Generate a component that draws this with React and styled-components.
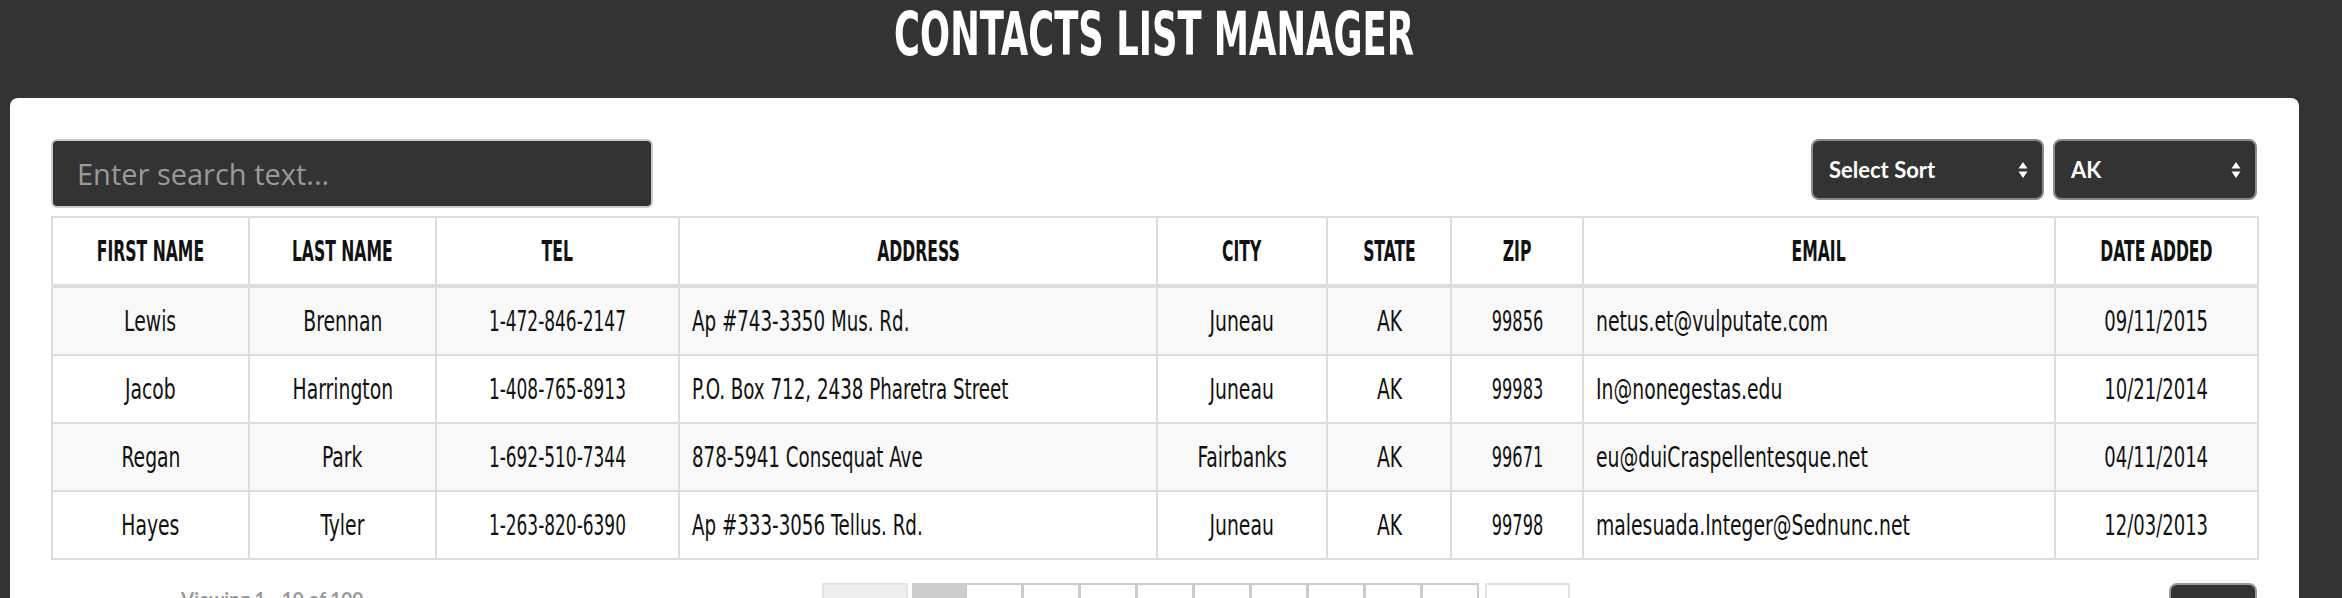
import React from "react";
import styled, { createGlobalStyle } from "styled-components";

const GlobalStyle = createGlobalStyle`
  html, body {
    margin: 0;
    padding: 0;
    background: #333333;
    height: 598px;
    overflow: hidden;
  }
`;

const condensed = `"DejaVu Sans Condensed", "DejaVu Sans", sans-serif`;

const Page = styled.div`
  width: 2342px;
  min-height: 598px;
  background: #333333;
`;

const Header = styled.header`
  margin-left: 10px;
  width: 2289px;
  height: 98px;
  display: flex;
  justify-content: center;
  align-items: flex-start;
`;

const Title = styled.h1`
  margin: 0;
  padding-top: 3px;
  font-family: ${condensed};
  font-weight: 700;
  font-size: 61px;
  line-height: 1;
  color: #ffffff;
  white-space: nowrap;
`;

// the reference uses a tall, narrow display face; squeeze ours to match its width
const Squeeze = styled.span`
  display: inline-block;
  transform: scaleX(${({ $sx }) => $sx});
  transform-origin: ${({ $left }) => ($left ? "left center" : "center center")};
`;

const Card = styled.main`
  margin-left: 10px;
  width: 2289px;
  min-height: 560px;
  box-sizing: border-box;
  background: #ffffff;
  border-radius: 8px 8px 0 0;
  padding: 41px 42px 0 41px;
`;

const Toolbar = styled.div`
  display: flex;
  justify-content: space-between;
  align-items: flex-start;
  margin-bottom: 8px;
`;

const SearchInput = styled.input`
  width: 602px;
  height: 69px;
  box-sizing: border-box;
  background: #333333;
  border: 2px solid #cccccc;
  border-radius: 6px;
  padding: 0 24px;
  font-family: "Open Sans", sans-serif;
  font-size: 29px;
  color: #ffffff;
  outline: none;
  &::placeholder {
    color: #9a9a9a;
  }
`;

const Selects = styled.div`
  display: flex;
  gap: 9px;
`;

const SelectBox = styled.div`
  position: relative;
  width: ${({ $w }) => $w}px;
  height: 61px;
  box-sizing: border-box;
  background: #333333;
  border: 2px solid #8a8a8a;
  border-radius: 8px;
  display: flex;
  align-items: center;
  padding: 0 16px;
  font-family: "Lato", sans-serif;
  font-weight: 700;
  font-size: 22px;
  color: #ffffff;
`;

const Arrows = styled.svg`
  position: absolute;
  right: 14px;
  top: 50%;
  transform: translateY(-50%);
`;

const Table = styled.table`
  width: 100%;
  border-collapse: collapse;
  table-layout: fixed;
  font-family: ${condensed};
  color: #111111;
`;

const Th = styled.th`
  height: 66px;
  border: 2px solid #dddddd;
  border-bottom-width: 4px;
  font-size: 28px;
  font-weight: 700;
  text-align: center;
  padding: 0 6px;
  white-space: nowrap;
`;

const Row = styled.tr`
  background: ${({ $odd }) => ($odd ? "#f9f9f9" : "#ffffff")};
`;

const Td = styled.td`
  height: 66px;
  border: 2px solid #dddddd;
  font-size: 29px;
  text-align: ${({ $left }) => ($left ? "left" : "center")};
  padding: 0 ${({ $left }) => ($left ? "12px" : "6px")};
  white-space: nowrap;
`;

const Footer = styled.div`
  display: grid;
  grid-template-columns: 771px auto 1fr;
  align-items: start;
  margin-top: 23px;
`;

const Viewing = styled.div`
  padding-left: 130px;
  padding-top: 4px;
  font-family: "Lato", sans-serif;
  font-weight: 700;
  font-size: 19px;
  color: #999999;
  white-space: nowrap;
`;

const Pager = styled.div`
  display: flex;
  align-items: flex-start;
`;

const PageBox = styled.div`
  width: ${({ $w }) => $w}px;
  height: 44px;
  box-sizing: border-box;
  border: 2px solid ${({ $edge }) => ($edge ? "#e3e3e3" : "#cccccc")};
  margin-left: ${({ $gap }) => $gap}px;
  background: ${({ $bg }) => $bg};
`;

const Corner = styled.div`
  display: flex;
  justify-content: flex-end;
`;

const AddButton = styled.div`
  width: 88px;
  height: 50px;
  box-sizing: border-box;
  background: #333333;
  border: 2px solid #999999;
  border-radius: 8px;
`;

const columns = [
  { w: 197, head: "FIRST NAME", sx: 0.72 },
  { w: 187, head: "LAST NAME", sx: 0.72 },
  { w: 243, head: "TEL", sx: 0.65 },
  { w: 478, head: "ADDRESS", sx: 0.7, left: true },
  { w: 170, head: "CITY", sx: 0.72 },
  { w: 124, head: "STATE", sx: 0.72 },
  { w: 132, head: "ZIP", sx: 0.62 },
  { w: 472, head: "EMAIL", sx: 0.72, left: true },
  { w: 203, head: "DATE ADDED", sx: 0.69 },
];

const contacts = [
  ["Lewis", "Brennan", "1-472-846-2147", "Ap #743-3350 Mus. Rd.", "Juneau", "AK", "99856", "netus.et@vulputate.com", "09/11/2015"],
  ["Jacob", "Harrington", "1-408-765-8913", "P.O. Box 712, 2438 Pharetra Street", "Juneau", "AK", "99983", "In@nonegestas.edu", "10/21/2014"],
  ["Regan", "Park", "1-692-510-7344", "878-5941 Consequat Ave", "Fairbanks", "AK", "99671", "eu@duiCraspellentesque.net", "04/11/2014"],
  ["Hayes", "Tyler", "1-263-820-6390", "Ap #333-3056 Tellus. Rd.", "Juneau", "AK", "99798", "malesuada.Integer@Sednunc.net", "12/03/2013"],
];

const SortArrows = () => (
  <Arrows width="10" height="18" viewBox="0 0 10 18">
    <path d="M5 1 L9.5 7.5 L0.5 7.5 Z" fill="#ffffff" />
    <path d="M5 17 L9.5 10.5 L0.5 10.5 Z" fill="#ffffff" />
  </Arrows>
);

const pages = [
  { w: 86, bg: "#eeeeee", edge: true, gap: 0 },
  { w: 54, bg: "#cccccc", gap: 4 },
  ...Array.from({ length: 9 }, () => ({ w: 58, bg: "#ffffff", gap: -1 })),
  { w: 85, bg: "#ffffff", edge: true, gap: 6 },
];

const App = () => {
  return (
    <Page>
      <GlobalStyle />
      <Header>
        <Title>
          <Squeeze $sx={0.645}>CONTACTS LIST MANAGER</Squeeze>
        </Title>
      </Header>
      <Card>
        <Toolbar>
          <SearchInput placeholder="Enter search text..." />
          <Selects>
            <SelectBox $w={233}>
              Select Sort
              <SortArrows />
            </SelectBox>
            <SelectBox $w={204}>
              AK
              <SortArrows />
            </SelectBox>
          </Selects>
        </Toolbar>

        <Table>
          <colgroup>
            {columns.map((c) => (
              <col key={c.head} style={{ width: c.w }} />
            ))}
          </colgroup>
          <thead>
            <tr>
              {columns.map((c) => (
                <Th key={c.head}>
                  <Squeeze $sx={0.62}>{c.head}</Squeeze>
                </Th>
              ))}
            </tr>
          </thead>
          <tbody>
            {contacts.map((row, r) => (
              <Row key={r} $odd={r % 2 === 0}>
                {row.map((v, i) => (
                  <Td key={i} $left={columns[i].left}>
                    <Squeeze $sx={columns[i].sx} $left={columns[i].left}>
                      {v}
                    </Squeeze>
                  </Td>
                ))}
              </Row>
            ))}
          </tbody>
        </Table>

        <Footer>
          <Viewing>Viewing 1 - 10 of 100</Viewing>
          <Pager>
            {pages.map((p, i) => (
              <PageBox key={i} $w={p.w} $bg={p.bg} $edge={p.edge} $gap={p.gap} />
            ))}
          </Pager>
          <Corner>
            <AddButton />
          </Corner>
        </Footer>
      </Card>
    </Page>
  );
};

export default App;
